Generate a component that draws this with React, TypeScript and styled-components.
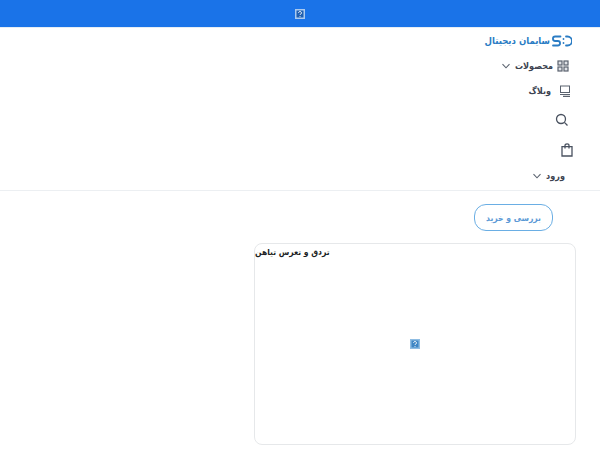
import React from "react";
import styled, { createGlobalStyle } from "styled-components";

const GlobalStyle = createGlobalStyle`
  html, body {
    margin: 0;
    padding: 0;
    background: #fff;
    font-family: "DejaVu Sans Condensed", "DejaVu Sans", sans-serif;
  }
`;

const Page = styled.div`
  direction: rtl;
  width: 600px;
  height: 450px;
  overflow: hidden;
`;

const TopBanner = styled.div`
  height: 27px;
  background: #1a73e8;
  display: flex;
  align-items: center;
  justify-content: center;
  border-bottom: 1px solid #e4edf5;
`;

const Header = styled.header`
  height: 162px;
  border-bottom: 1px solid #eceff2;
  padding: 0 27px;
  display: flex;
  flex-direction: column;
  align-items: flex-start;
`;

const Logo = styled.div`
  height: 25px;
  margin-right: 1px;
  display: flex;
  align-items: center;
  gap: 2px;
  color: #2a7cc4;
  font-size: 9.5px;
  font-weight: 700;
`;

const NavRow = styled.div<{ $height: number; $indent: number; $gap?: number }>`
  height: ${(p) => p.$height}px;
  margin-right: ${(p) => p.$indent}px;
  display: flex;
  align-items: center;
  gap: ${(p) => p.$gap ?? 4}px;
  color: #3c4350;
  font-size: 9px;
  font-weight: 700;
`;

const Main = styled.main`
  padding: 13px 24px 0;
`;

const BuyButton = styled.button`
  display: flex;
  align-items: center;
  justify-content: center;
  width: 79px;
  height: 27px;
  margin: 0 23px 0 0;
  padding: 0;
  background: #fff;
  border: 1.5px solid #6aaee4;
  border-radius: 12px;
  color: #5c9ad6;
  font-family: inherit;
  font-size: 8.5px;
  font-weight: 700;
`;

const Card = styled.section`
  width: 320px;
  height: 200px;
  margin-top: 12px;
  border: 1px solid #e6e8ea;
  border-radius: 8px;
  display: flex;
  flex-direction: column;
`;

const CardTitle = styled.div`
  color: #1c1f24;
  font-size: 8.5px;
  font-weight: 700;
  line-height: 16px;
  text-align: left;
`;

const CardBody = styled.div`
  flex: 1;
  display: flex;
  align-items: center;
  justify-content: center;
  padding-bottom: 16px;
`;

const BrokenImage = ({ light }: { light?: boolean }) => (
  <svg width="10" height="10" viewBox="0 0 10 10">
    <rect width="10" height="10" fill={light ? "#a9c9ef" : "#8fbde3"} />
    <rect x="1.5" y="1.5" width="7" height="7" fill={light ? "#1f5fb0" : "#3f86c4"} />
    <path d="M3.6 3.8a1.4 1.4 0 1 1 2.2 1.2c-.5.3-.8.5-.8 1M5 7v.8" stroke="#fff" strokeWidth="1" fill="none" />
  </svg>
);

const Down = () => (
  <svg width="10" height="10" viewBox="0 0 10 10" fill="none" stroke="#5a626e" strokeWidth="1.1">
    <path d="M1.5 3.2 5 6.8l3.5-3.6" />
  </svg>
);

export default function App() {
  return (
    <Page>
      <GlobalStyle />
      <TopBanner>
        <BrokenImage light />
      </TopBanner>
      <Header>
        <Logo>
          <svg width="20" height="12" viewBox="0 0 20 12" fill="none" stroke="#2a7cc4" strokeWidth="1.800" strokeLinecap="round">
            <path d="M8.500 1.500H3.200a2.200 2.200 0 0 0 0 4.500h2.600a2.200 2.200 0 0 1 0 4.500H1" />
            <path d="M11.500 4v.1M11.500 8v.1" />
            <path d="M14 1.500h1.500a4.500 4.500 0 0 1 0 9H14" />
          </svg>
          <span>سایمان دیجیتال</span>
        </Logo>
        <NavRow $height={25} $indent={4}>
          <svg width="12" height="12" viewBox="0 0 12 12" fill="#dfe2e6" stroke="#5a626e" strokeWidth="1.200">
            <rect x="1" y="1" width="4" height="4" />
            <rect x="7" y="1" width="4" height="4" />
            <rect x="1" y="7" width="4" height="4" />
            <rect x="7" y="7" width="4" height="4" />
          </svg>
          <span>محصولات</span>
          <Down />
        </NavRow>
        <NavRow $height={25} $indent={2} $gap={8}>
          <svg width="12" height="12" viewBox="0 0 12 12" fill="none" stroke="#5a626e">
            <rect x="1.500" y="1" width="9" height="6.500" />
            <path d="M1 9.500h10" />
            <path d="M4 11.500h7" strokeWidth="1.500" />
          </svg>
          <span>وبلاگ</span>
        </NavRow>
        <NavRow $height={34} $indent={4}>
          <svg width="14" height="14" viewBox="0 0 14 14" fill="none" stroke="#4a5260" strokeWidth="1.300">
            <circle cx="6" cy="6" r="4.500" />
            <path d="M9.400 9.400 12.500 12.500" />
          </svg>
        </NavRow>
        <NavRow $height={26} $indent={0}>
          <svg width="12" height="14" viewBox="0 0 12 14" fill="none" stroke="#4a5260" strokeWidth="1.300">
            <path d="M1 3.700h10v9.300H1z" />
            <path d="M4 5.500V2.500a2 1.600 0 0 1 4 0v3" />
          </svg>
        </NavRow>
        <NavRow $height={26} $indent={8}>
          <span>ورود</span>
          <Down />
        </NavRow>
      </Header>
      <Main>
        <BuyButton>بررسی و خرید</BuyButton>
        <Card>
          <CardTitle>تردق و تعرس تیاهن</CardTitle>
          <CardBody>
            <BrokenImage />
          </CardBody>
        </Card>
      </Main>
    </Page>
  );
}
